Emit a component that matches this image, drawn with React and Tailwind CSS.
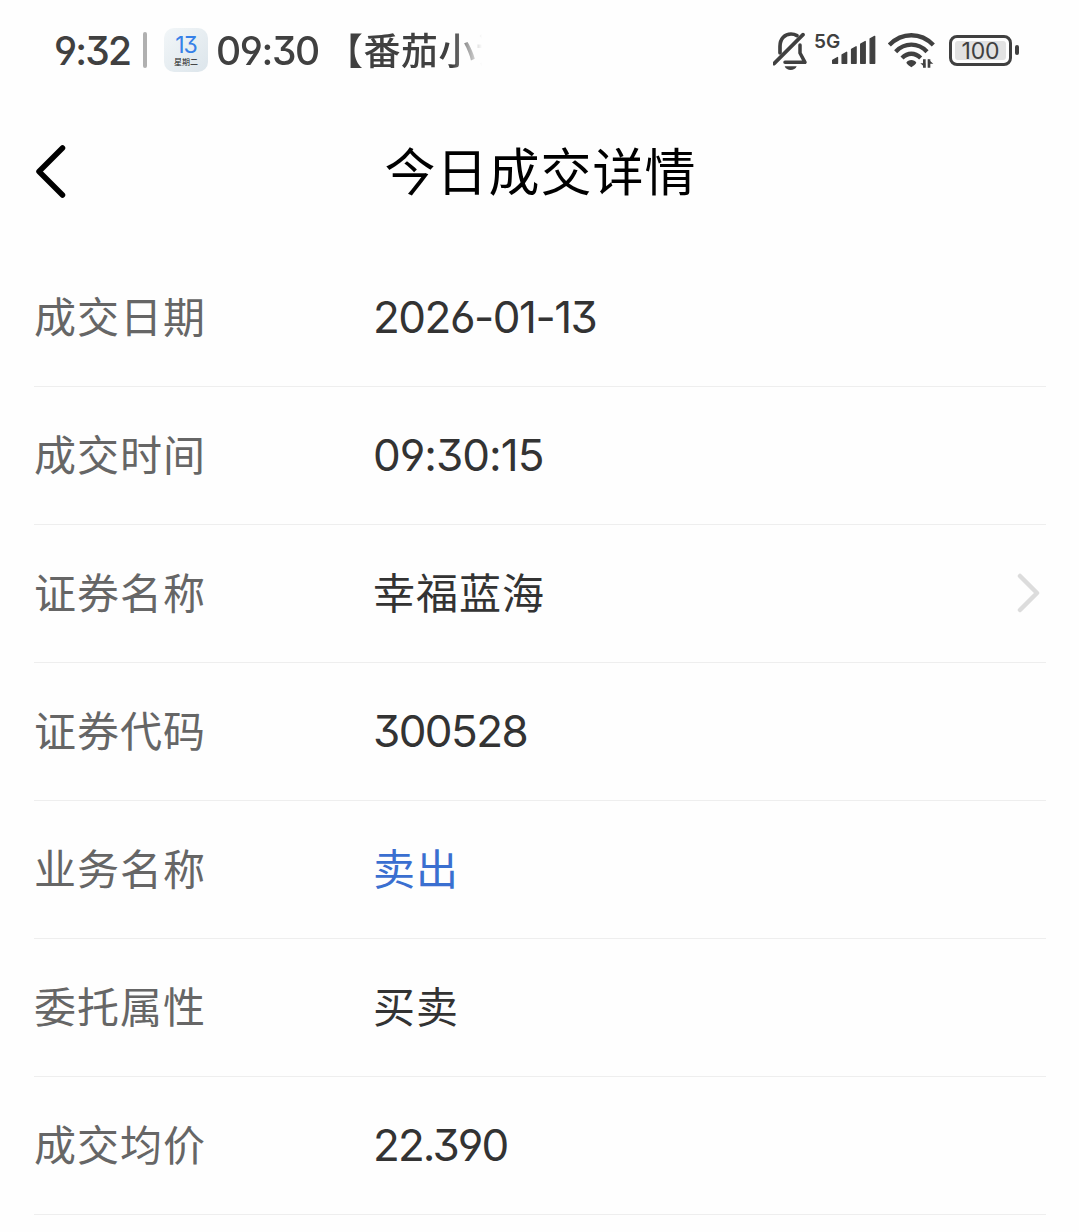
const rows = [
  { label: '成交日期', value: '2026-01-13', numeric: true, spacing: 'tracking-[-1.5px]' },
  { label: '成交时间', value: '09:30:15', numeric: true, spacing: 'tracking-[-1px]' },
  { label: '证券名称', value: '幸福蓝海', link: true },
  { label: '证券代码', value: '300528', numeric: true, spacing: 'tracking-[-1.6px]' },
  { label: '业务名称', value: '卖出', color: 'text-[#3a6fd0]' },
  { label: '委托属性', value: '买卖' },
  { label: '成交均价', value: '22.390', numeric: true, spacing: 'tracking-[-1.9px]' },
];

const MutedBell = () => (
  <svg className="w-[36px] h-[39px]" viewBox="0 0 108 117" fill="none" stroke="#404040" strokeLinecap="round" strokeLinejoin="round">
    <path d="M21 66V46C21 22 36 9 54 9C61 9 67 11 72 14" strokeWidth="11" />
    <path d="M3 98L90 11" strokeWidth="11" />
    <path d="M81 42V66L96 94H36" strokeWidth="10.500" />
    <path d="M35 106H71C68 114 61 117 53 117C45 117 38 114 35 106Z" fill="#404040" stroke="none" />
  </svg>
);

const Signal = () => (
  <svg className="w-[45px] h-[30px]" viewBox="0 0 135 90" fill="#404040" stroke="#404040" strokeWidth="4" strokeLinejoin="round">
    <path d="M2 77L17 68V86H2Z" />
    <path d="M31 60L45 52V86H31Z" />
    <path d="M60 43L74 35V86H60Z" />
    <path d="M88 27L102 19V86H88Z" />
    <path d="M117 11L131 3V86H117Z" />
  </svg>
);

const Wifi = () => (
  <svg className="w-[47px] h-[36px]" viewBox="0 0 141 108" fill="none" stroke="#404040" strokeWidth="13">
    <path d="M4 39C42 0 98 0 136 39" />
    <path d="M23 59C50 31 90 31 117 59" />
    <path d="M42 78C59 61 81 61 98 78" />
    <path d="M55 92C60 81 80 81 85 92C83 98 75 101 70 106C65 101 57 98 55 92Z" fill="#404040" stroke="none" />
    <path d="M109 82V107M123 107V82" strokeWidth="8" />
    <path d="M112 107L97 94H112ZM120 82L136 95H120Z" fill="#404040" stroke="none" />
  </svg>
);

const Battery = () => (
  <div className="flex items-center gap-[3px]">
    <div className="w-[63px] h-[31px] border-[3px] border-[#404040] rounded-[8px] p-[3px]">
      <div className="flex h-full items-center justify-center rounded-[3px] bg-[#e2e2e2] text-[23px] leading-none tracking-[-0.2px] pt-[2px] font-normal">
        100
      </div>
    </div>
    <div className="w-[4px] h-[10px] rounded-full bg-[#404040]"></div>
  </div>
);

const StatusBar = () => (
  <div className="flex h-[100px] items-center pl-[54px] pr-[60px] text-[#404040]">
    <span className="w-[78px] pt-[2px] text-[39px] font-medium tracking-[-1.8px] whitespace-nowrap">9:32</span>
    <div className="ml-[11px] w-[4px] h-[36px] rounded-full bg-[#b0b0b0]"></div>
    <div className="ml-[17px] w-[44px] h-[44px] rounded-[10px] bg-linear-to-br from-[#f2f6f8] to-[#dce5eb] flex flex-col items-center">
      <span className="mt-[6px] text-[23px] leading-[23px] tracking-[-1px] text-[#3680e8]">13</span>
      <span className="text-[8px] leading-[10px] text-[#222]">星期二</span>
    </div>
    <div className="ml-[8px] w-[266px] overflow-hidden whitespace-nowrap flex items-center mask-r-from-[89%] mask-r-to-[100%]">
      <span className="w-[110px] pt-[2px] shrink-0 text-[39px] font-medium tracking-[-1.4px]">09:30</span>
      <span className="pt-[3px] text-[37px] leading-[54px] font-medium tracking-[0.5px]">【番茄小说】</span>
    </div>
    <div className="ml-auto flex items-center">
      <MutedBell />
      <div className="flex items-center w-[61px] ml-[6px]">
        <span className="w-[17px] shrink-0 -ml-[1px] mr-[1px] -mt-[18px] text-[19px] leading-none font-semibold whitespace-nowrap">5G</span>
        <Signal />
      </div>
      <div className="ml-[12px]"><Wifi /></div>
      <div className="ml-[14px]"><Battery /></div>
    </div>
  </div>
);

const App = () => {
  return (
    <div className="w-[1079px] h-[1232px] overflow-hidden bg-[#fefefe] font-['Inter','Noto_Sans_CJK_SC',sans-serif] [font-feature-settings:'cv09','cv03','cv04']">
      <StatusBar />

      <header className="grid grid-cols-[100px_1fr_100px] h-[149px] items-start text-black">
        <svg className="ml-[34px] mt-[43px] w-[34px] h-[57px]" viewBox="0 0 34 57" fill="none" stroke="currentColor" strokeWidth="5.500" strokeLinecap="round" strokeLinejoin="round">
          <path d="M28.500 5L5 28.500L28.500 52" />
        </svg>
        <h1 className="mt-[36px] pl-[2px] text-center text-[51px] leading-[74px] tracking-[1px] font-normal">今日成交详情</h1>
      </header>

      <main className="ml-[34px] mr-[33px]">
        {rows.map((row) => (
          <div key={row.label} className="flex h-[138px] items-center border-b border-[#eeeeee]">
            <span className="w-[339px] text-[42px] leading-[60px] tracking-[1px] text-[#666]">{row.label}</span>
            {row.numeric ? (
              <span className={`pb-[2px] text-[44px] leading-[60px] text-[#333] ${row.spacing}`}>{row.value}</span>
            ) : (
              <span className={`text-[42px] leading-[60px] tracking-[1px] ${row.color || 'text-[#333]'}`}>{row.value}</span>
            )}
            {row.link && (
              <svg className="ml-auto mr-[4px] mb-[2px] w-[26px] h-[40px]" viewBox="0 0 26 40" fill="none" stroke="#dcdcdc" strokeWidth="4.500" strokeLinecap="round" strokeLinejoin="round">
                <path d="M4 3L21 20L4 37" />
              </svg>
            )}
          </div>
        ))}
      </main>
    </div>
  );
};

export default App;
